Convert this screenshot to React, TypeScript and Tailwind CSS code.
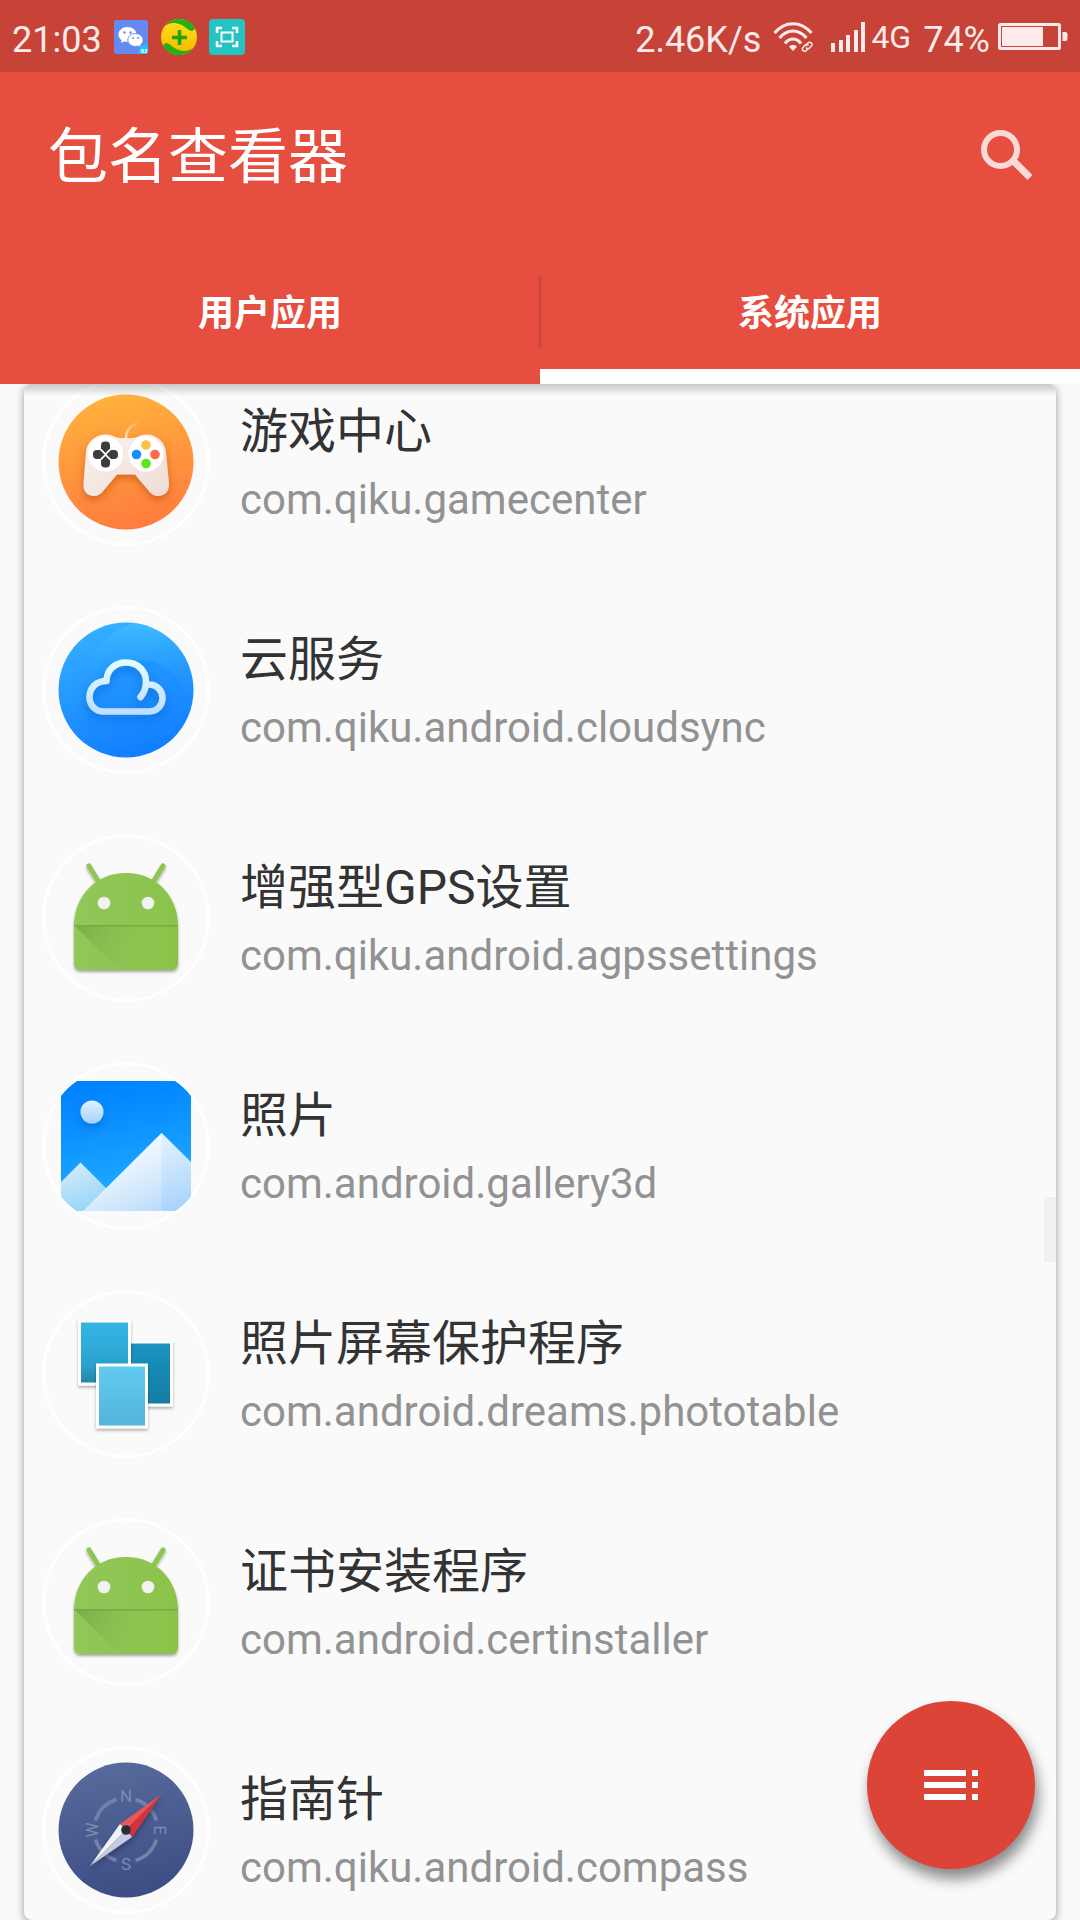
import type { ReactNode } from "react";

function GameIcon() {
  return (
    <svg viewBox="0 0 168 168" className="size-full" aria-hidden="true">
      <defs>
        <linearGradient id="game-bg" x1="0.4" y1="0" x2="0.6" y2="1">
          <stop offset="0" stopColor="#ffb23c" />
          <stop offset="1" stopColor="#ff7b3e" />
        </linearGradient>
        <linearGradient id="game-pad" x1="0" y1="0" x2="1" y2="1">
          <stop offset="0" stopColor="#fbf3ef" />
          <stop offset="1" stopColor="#eedcd3" />
        </linearGradient>
        <linearGradient id="game-cord" x1="0" y1="1" x2="1" y2="0">
          <stop offset="0" stopColor="#ffe6c8" />
          <stop offset="1" stopColor="#ffc070" stopOpacity="0.3" />
        </linearGradient>
        <filter id="game-shadow" x="-30%" y="-30%" width="160%" height="170%">
          <feDropShadow dx="0" dy="4" stdDeviation="4" floodColor="#b84a00" floodOpacity="0.55" />
        </filter>
      </defs>
      <circle cx="84" cy="84" r="67.5" fill="url(#game-bg)" />
      <path d="M84 61C84 52 88 47 97 45" fill="none" stroke="url(#game-cord)" strokeWidth="2.5" strokeLinecap="round" />
      <path
        d="M64 56.500C70 56.500 74 60 78 60H91C95 60 98 56.500 104 56.500C115 56.500 123 64 124 74L127 106C127.500 113 123 118 116 118C112 118 109 116 106 112L93 96.500H75L62 112C59 116 56 118 52 118C45 118 41 113 41.500 106L44 74C45 64 53 56.500 64 56.500Z"
        fill="url(#game-pad)"
        filter="url(#game-shadow)"
      />
      <circle cx="63.500" cy="76" r="17.500" fill="#fff" />
      <circle cx="104" cy="76" r="17.500" fill="#fff" />
      <g fill="#3d3d3d">
        <path d="M59 67.500a4 4 0 0 1 4-4h1a4 4 0 0 1 4 4v3l-4.500 4.500-4.500-4.500z" />
        <path d="M59 85.500a4 4 0 0 0 4 4h1a4 4 0 0 0 4-4v-3l-4.500-4.500-4.500 4.500z" />
        <path d="M55 72a4 4 0 0 0-4 4v1a4 4 0 0 0 4 4h3l4.500-4.500-4.500-4.500z" />
        <path d="M72 72a4 4 0 0 1 4 4v1a4 4 0 0 1-4 4h-3l-4.500-4.500 4.500-4.500z" />
      </g>
      <circle cx="104" cy="67" r="4.800" fill="#ffc045" />
      <circle cx="94.500" cy="76.500" r="4.800" fill="#1a8cff" />
      <circle cx="113" cy="76.500" r="4.800" fill="#ff6a4d" />
      <circle cx="104" cy="85.500" r="4.800" fill="#5ae61a" />
    </svg>
  );
}

function CloudIcon() {
  return (
    <svg viewBox="0 0 168 168" className="size-full" aria-hidden="true">
      <defs>
        <linearGradient id="cloud-bg" x1="0.3" y1="0" x2="0.6" y2="1">
          <stop offset="0" stopColor="#35b0ff" />
          <stop offset="1" stopColor="#0f7dff" />
        </linearGradient>
        <linearGradient id="cloud-swirl" x1="0.5" y1="0" x2="0.5" y2="1">
          <stop offset="0" stopColor="#45c4ff" stopOpacity="0.7" />
          <stop offset="0.600" stopColor="#1a8cff" stopOpacity="0" />
        </linearGradient>
        <linearGradient id="cloud-low" x1="0.5" y1="0" x2="0.5" y2="1">
          <stop offset="0" stopColor="#1485ff" stopOpacity="0.400" />
          <stop offset="0.700" stopColor="#1485ff" stopOpacity="0" />
        </linearGradient>
        <linearGradient id="cloud-line" x1="0" y1="0" x2="0" y2="1">
          <stop offset="0" stopColor="#e2fdff" />
          <stop offset="1" stopColor="#bfdfff" />
        </linearGradient>
        <filter id="cloud-shadow" x="-30%" y="-30%" width="160%" height="170%">
          <feDropShadow dx="0" dy="5" stdDeviation="5" floodColor="#0058c8" floodOpacity="0.5" />
        </filter>
        <clipPath id="cloud-clip">
          <circle cx="84" cy="84" r="67.500" />
        </clipPath>
      </defs>
      <g clipPath="url(#cloud-clip)">
        <rect x="16" y="16" width="136" height="136" fill="url(#cloud-bg)" />
        <circle cx="109" cy="79" r="64" fill="url(#cloud-swirl)" />
        <circle cx="96" cy="108" r="54" fill="url(#cloud-low)" />
      </g>
      <g fill="none" strokeWidth="6.500" strokeLinecap="round" strokeLinejoin="round" filter="url(#cloud-shadow)">
        <path
          d="M107 78.500C115 78.500 120.500 84.500 120.500 92C120.500 99.500 115 105.500 107 105.500H62C53 105.500 47.500 99 47.500 91C47.500 82 54 75 64.500 75C64.500 64 73 56.500 84 56.500C96 56.500 104 65 104 75.500C104 82 102 87 98.500 91"
          stroke="url(#cloud-line)"
        />
      </g>
    </svg>
  );
}

function AndroidIcon() {
  return (
    <svg viewBox="0 0 168 168" className="size-full" aria-hidden="true">
      <defs>
        <linearGradient id="droid-body" x1="0" y1="0" x2="1" y2="0">
          <stop offset="0" stopColor="#92c75a" />
          <stop offset="1" stopColor="#8bc34a" />
        </linearGradient>
        <linearGradient id="droid-fold" gradientUnits="userSpaceOnUse" x1="40" y1="90" x2="106" y2="118">
          <stop offset="0" stopColor="#739f45" stopOpacity="0.600" />
          <stop offset="1" stopColor="#8bc34a" stopOpacity="0" />
        </linearGradient>
        <filter id="droid-shadow" x="-20%" y="-20%" width="140%" height="140%">
          <feDropShadow dx="0" dy="2" stdDeviation="1.500" floodColor="#000" floodOpacity="0.350" />
        </filter>
      </defs>
      <g filter="url(#droid-shadow)">
        <path d="M47 32L58 50M121 32L110 50" stroke="#8fc653" strokeWidth="5" strokeLinecap="round" />
        <path d="M32 92C32 62 54 39 84 39C114 39 136 62 136 92V130a6 6 0 0 1-6 6H38a6 6 0 0 1-6-6Z" fill="url(#droid-body)" />
      </g>
      <path d="M32 91H136V130a6 6 0 0 1-6 6H77Z" fill="url(#droid-fold)" />
      <path d="M32 91H136V92.500H32Z" fill="#78aa43" />
      <circle cx="62" cy="69" r="6.300" fill="#f2f2f2" />
      <circle cx="106" cy="69" r="6.300" fill="#f2f2f2" />
    </svg>
  );
}

function GalleryIcon() {
  return (
    <svg viewBox="0 0 168 168" className="size-full" aria-hidden="true">
      <defs>
        <linearGradient id="gal-sky" x1="0.4" y1="0" x2="0.6" y2="1">
          <stop offset="0" stopColor="#0082ff" />
          <stop offset="1" stopColor="#24b1ff" />
        </linearGradient>
        <linearGradient id="gal-big" gradientUnits="userSpaceOnUse" x1="90" y1="80" x2="124" y2="150">
          <stop offset="0" stopColor="#f8fcff" />
          <stop offset="1" stopColor="#b9dbfb" />
        </linearGradient>
        <linearGradient id="gal-side" gradientUnits="userSpaceOnUse" x1="118" y1="72" x2="146" y2="150">
          <stop offset="0" stopColor="#e6f3ff" />
          <stop offset="1" stopColor="#a4d1fb" />
        </linearGradient>
        <linearGradient id="gal-small" gradientUnits="userSpaceOnUse" x1="28" y1="100" x2="46" y2="149">
          <stop offset="0" stopColor="#d6ecfa" />
          <stop offset="1" stopColor="#97d5f7" />
        </linearGradient>
        <linearGradient id="gal-sun" x1="0.5" y1="0" x2="0.5" y2="1">
          <stop offset="0" stopColor="#e2f1ff" />
          <stop offset="1" stopColor="#a5d1fb" />
        </linearGradient>
        <filter id="gal-shadow" x="-60%" y="-60%" width="220%" height="240%">
          <feDropShadow dx="0" dy="5" stdDeviation="4" floodColor="#0050b0" floodOpacity="0.400" />
        </filter>
        <clipPath id="gal-clip">
          <path d="M35 19H133Q142 25 149 34V134Q142 143 133 149H35Q26 143 19 134V34Q26 25 35 19Z" />
        </clipPath>
      </defs>
      <g clipPath="url(#gal-clip)">
        <rect x="19" y="19" width="130" height="130" fill="url(#gal-sky)" />
        <circle cx="50" cy="50" r="11.500" fill="url(#gal-sun)" filter="url(#gal-shadow)" />
        <path d="M-10 149L38.500 100.500L87 149Z" fill="url(#gal-small)" />
        <path d="M41 149L119.500 71L160 111V149Z" fill="url(#gal-big)" />
        <path d="M119.500 71L160 111V149H119.500Z" fill="url(#gal-side)" />
      </g>
    </svg>
  );
}

function PhotoTableIcon() {
  return (
    <svg viewBox="0 0 168 168" className="size-full" aria-hidden="true">
      <defs>
        <linearGradient id="pt-a" x1="0" y1="0" x2="0" y2="1">
          <stop offset="0" stopColor="#35b6e6" />
          <stop offset="0.700" stopColor="#2ba1cf" />
          <stop offset="1" stopColor="#2383a8" />
        </linearGradient>
        <linearGradient id="pt-b" x1="0" y1="0" x2="0" y2="1">
          <stop offset="0" stopColor="#1b93c0" />
          <stop offset="1" stopColor="#157ca3" />
        </linearGradient>
        <linearGradient id="pt-c" x1="0" y1="0" x2="0" y2="1">
          <stop offset="0" stopColor="#62cbf2" />
          <stop offset="1" stopColor="#53b4da" />
        </linearGradient>
        <filter id="pt-shadow" x="-20%" y="-20%" width="140%" height="140%">
          <feDropShadow dx="0" dy="2" stdDeviation="1.500" floodColor="#000" floodOpacity="0.300" />
        </filter>
      </defs>
      <g stroke="#fff" strokeWidth="3">
        <rect x="87.500" y="52" width="42" height="63" fill="url(#pt-b)" filter="url(#pt-shadow)" />
        <rect x="37.500" y="31" width="50" height="63" fill="url(#pt-a)" filter="url(#pt-shadow)" />
        <rect x="55.500" y="75" width="49" height="62" fill="url(#pt-c)" filter="url(#pt-shadow)" />
      </g>
    </svg>
  );
}

function CompassIcon() {
  return (
    <svg viewBox="0 0 168 168" className="size-full" aria-hidden="true">
      <defs>
        <linearGradient id="cmp-bg" x1="0.400" y1="0" x2="0.600" y2="1">
          <stop offset="0" stopColor="#566a9b" />
          <stop offset="1" stopColor="#3c4d84" />
        </linearGradient>
        <filter id="cmp-shadow" x="-20%" y="-20%" width="140%" height="150%">
          <feDropShadow dx="1" dy="3" stdDeviation="2" floodColor="#1c2850" floodOpacity="0.500" />
        </filter>
      </defs>
      <circle cx="84" cy="84" r="67.500" fill="url(#cmp-bg)" />
      <path
        d="M93.500 53.500A32 32 0 0 1 114.500 74.500M114.500 93.500A32 32 0 0 1 93.500 114.500M74.500 114.500A32 32 0 0 1 53.500 93.500M53.500 74.500A32 32 0 0 1 74.500 53.500"
        fill="none"
        stroke="#7282ab"
        strokeWidth="3.500"
      />
      <g fill="#7b8ab2" fontFamily="Roboto, sans-serif" fontSize="17" textAnchor="middle">
        <text x="84" y="56">N</text>
        <text x="84" y="124">S</text>
        <text x="118" y="90" transform="rotate(90 118 84)">E</text>
        <text x="50" y="90" transform="rotate(-90 50 84)">W</text>
      </g>
      <g filter="url(#cmp-shadow)">
        <path d="M120 48L78 78L84 84Z" fill="#ea5455" />
        <path d="M120 48L90 91L84 84Z" fill="#d23338" />
        <path d="M48 120L78 78L84 84Z" fill="#f3f3f6" />
        <path d="M48 120L90 91L84 84Z" fill="#c5cbe2" />
      </g>
      <circle cx="84" cy="84" r="4.800" fill="#253036" />
    </svg>
  );
}

const apps: { name: string; pkg: string; icon: ReactNode }[] = [
  { name: "游戏中心", pkg: "com.qiku.gamecenter", icon: <GameIcon /> },
  { name: "云服务", pkg: "com.qiku.android.cloudsync", icon: <CloudIcon /> },
  { name: "增强型GPS设置", pkg: "com.qiku.android.agpssettings", icon: <AndroidIcon /> },
  { name: "照片", pkg: "com.android.gallery3d", icon: <GalleryIcon /> },
  { name: "照片屏幕保护程序", pkg: "com.android.dreams.phototable", icon: <PhotoTableIcon /> },
  { name: "证书安装程序", pkg: "com.android.certinstaller", icon: <AndroidIcon /> },
  { name: "指南针", pkg: "com.qiku.android.compass", icon: <CompassIcon /> },
];

function StatusBar() {
  return (
    <div className="flex h-[72px] shrink-0 items-center justify-between bg-[#c74337] px-3 pt-[2px] text-[36px] leading-none text-[#fcebea]">
      <div className="flex items-center">
        <span className="pt-1.5">21:03</span>
        <svg viewBox="0 0 34 34" className="ml-3 size-[34px]" aria-hidden="true">
          <rect width="34" height="34" rx="3" fill="#668af3" />
          <path
            d="M13.500 7C8.500 7 4.500 10.300 4.500 14.500c0 2.300 1.200 4.300 3.100 5.700L7 23l3.300-1.600c1 .3 2.100.5 3.200.5 5 0 9-3.200 9-7.400S18.500 7 13.500 7Z"
            fill="#fff"
          />
          <path
            d="M21.500 13.500c-4.300 0-7.700 2.900-7.700 6.500s3.400 6.500 7.700 6.500c1 0 1.900-.2 2.800-.4l2.700 1.300-.6-2.300c1.700-1.200 2.700-3 2.700-5.100 0-3.600-3.300-6.500-7.600-6.500Z"
            fill="#fff"
            stroke="#668af3"
            strokeWidth="1"
          />
          <g fill="#668af3">
            <circle cx="10.500" cy="12.500" r="1.200" />
            <circle cx="16.500" cy="12.500" r="1.200" />
            <circle cx="19" cy="18" r="1" />
            <circle cx="24" cy="18" r="1" />
          </g>
          <path d="M34 24v7a3 3 0 0 1-3 3h-7a10 10 0 0 1 10-10Z" fill="#19c5f5" />
          <text x="30" y="33" fontSize="6" fontWeight="700" fill="#fff" textAnchor="middle" fontFamily="Roboto, sans-serif">
            02
          </text>
        </svg>
        <svg viewBox="0 0 36 36" className="ml-[13px] size-[36px]" aria-hidden="true">
          <defs>
            <linearGradient id="st-yellow" x1="0" y1="0" x2="0" y2="1">
              <stop offset="0" stopColor="#ffe01a" />
              <stop offset="1" stopColor="#f6b800" />
            </linearGradient>
          </defs>
          <circle cx="18" cy="18" r="18" fill="url(#st-yellow)" />
          <path
            id="st-leaf"
            d="M4 7C8 2 12 0 18 0C26 0 31 4 34 9.500L31.500 12C26 12 24 5 14 4C10 3.600 7 5 4 7Z"
            fill="#22b012"
          />
          <use href="#st-leaf" transform="rotate(180 18 18)" />
          <path d="M18.500 11v15M11 18.500h15" stroke="#22a30c" strokeWidth="3.600" />
        </svg>
        <svg viewBox="0 0 36 36" className="ml-3 size-[36px]" aria-hidden="true">
          <rect width="36" height="36" rx="4" fill="#25c4c4" />
          <path d="M8 14V9h5M23 9h5v5M28 22v5h-5M13 27H8v-5" fill="none" stroke="#fff" strokeWidth="2.500" />
          <rect x="12.500" y="13.500" width="11" height="9" fill="none" stroke="#fff" strokeWidth="2" />
        </svg>
      </div>
      <div className="flex items-center">
        <span className="pt-1.5">2.46K/s</span>
        <svg viewBox="0 0 40 30" className="ml-3 h-[30px] w-[40px]" fill="none" stroke="#fcebea" aria-hidden="true">
          <path d="M1.500 11C12 -1.500 28 -1.500 38.500 11" strokeWidth="3" />
          <path d="M6.500 16C14 6.500 26 6.500 33.500 16" strokeWidth="3" />
          <path d="M12 21.500C16.500 15.500 23.500 15.500 28 21.500" strokeWidth="3" />
          <path d="M20 23c1.600 0 3 .6 4 1.800L20 29l-4-4.200C17 23.600 18.400 23 20 23Z" fill="#fcebea" stroke="none" />
          <g strokeWidth="1.500" strokeLinecap="round">
            <path d="M33 23.500l2-2.500a2.200 2.200 0 0 1 3.400 3L36.500 26a2.200 2.200 0 0 1-3 0" />
            <path d="M35 23a2.200 2.200 0 0 0-3 .200L30 25.500a2.200 2.200 0 0 0 3.300 3L35 26.500" />
          </g>
        </svg>
        <svg viewBox="0 0 34 30" className="ml-[18px] h-[30px] w-[34px]" fill="#fcebea" aria-hidden="true">
          <rect x="0" y="21" width="4" height="9" />
          <rect x="8" y="18" width="4" height="12" />
          <rect x="15" y="13" width="4" height="17" />
          <rect x="23" y="8" width="4" height="22" />
          <rect x="30" y="0" width="4" height="30" />
        </svg>
        <span className="ml-1.5 text-[32px] leading-none">4G</span>
        <span className="ml-3 pt-1.5">74%</span>
        <svg viewBox="0 0 70 28" className="ml-2 h-[28px] w-[70px]" aria-hidden="true">
          <rect x="1.500" y="1.500" width="60" height="24" rx="1" fill="none" stroke="#fcebea" strokeWidth="3" />
          <rect x="4" y="4" width="41" height="19" fill="#fcebea" />
          <path d="M64.500 9H67a2.500 2.500 0 0 1 2.500 2.500v4A2.500 2.500 0 0 1 67 18H64.500Z" fill="#fcebea" />
        </svg>
      </div>
    </div>
  );
}

export default function App() {
  return (
    <div
      lang="zh-CN"
      className="relative flex h-screen flex-col overflow-hidden bg-[#fafafa] font-[Roboto,'Noto_Sans_CJK_SC',sans-serif]"
    >
      <StatusBar />
      <header className="relative z-10 shrink-0 bg-[#e64e40] text-white">
        <div className="flex h-[168px] items-center justify-between pr-[46px] pl-12">
          <h1 className="pt-1 text-[60px] leading-[88px]">包名查看器</h1>
          <button type="button" aria-label="搜索" className="block">
            <svg viewBox="0 0 54 54" className="size-[54px]" fill="none" stroke="#fadad7" aria-hidden="true">
              <circle cx="20.500" cy="20.500" r="16.500" strokeWidth="6" />
              <path d="M34 32.500L35.500 34L50 48.500" strokeWidth="7" />
            </svg>
          </button>
        </div>
        <nav role="tablist" className="relative grid h-36 grid-cols-2 text-[36px] font-bold">
          <button type="button" role="tab" aria-selected="false" className="pt-1">
            用户应用
          </button>
          <button type="button" role="tab" aria-selected="true" className="pt-1">
            系统应用
          </button>
          <span className="absolute top-9 left-1/2 h-[72px] w-[3px] -translate-x-1/2 bg-[#cb463a]" />
          <span className="absolute right-0 bottom-0 h-[15px] w-1/2 bg-white" />
        </nav>
      </header>
      <main className="relative mx-6 min-h-0 flex-1 overflow-hidden rounded-lg bg-[#fafafa] shadow-[0_2px_8px_rgba(0,0,0,0.4)]">
        <ul className="-mt-9">
          {apps.map((app) => (
            <li key={app.pkg} className="flex h-[228px] items-center pl-[18px]">
              <div className="size-[168px] shrink-0 rounded-full shadow-[inset_0_0_0_3px_#fff]">{app.icon}</div>
              <div className="ml-[30px] min-w-0 pt-2">
                <p className="text-[48px] leading-[68px] text-[#333333]">{app.name}</p>
                <p className="text-[42px] leading-[68px] text-[#929292]">{app.pkg}</p>
              </div>
            </li>
          ))}
        </ul>
        <div className="absolute inset-x-0 top-0 h-3 bg-linear-to-b from-black/20 to-transparent" />
        <div className="absolute top-[813px] right-0 h-[65px] w-3 bg-[#f0f0f0]" />
      </main>
      <button
        type="button"
        aria-label="菜单"
        className="absolute right-[45px] bottom-[51px] flex size-[168px] items-center justify-center rounded-full bg-[#db4437] shadow-[3px_10px_14px_rgba(0,0,0,0.45)]"
      >
        <svg viewBox="0 0 54 30" className="h-[30px] w-[54px]" fill="#fff" aria-hidden="true">
          <path d="M0 0h42v6H0zM48 0h6v6h-6zM0 12h42v6H0zM48 12h6v6h-6zM0 24h42v6H0zM48 24h6v6h-6z" />
        </svg>
      </button>
    </div>
  );
}
